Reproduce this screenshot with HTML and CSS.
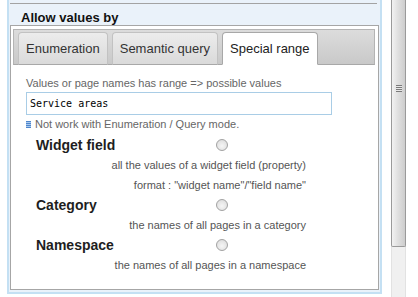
FILE: index.html
```html
<!DOCTYPE html>
<html lang="en">
<head>
  <meta charset="UTF-8" />
  <title>Allow values by</title>
  <link rel="stylesheet" href="styles.css">
</head>
<body>
  <div class="page">
    <div class="panel">
      <div class="panel-top"></div>
      <div class="section-title">Allow values by</div>

      <div class="tab-box">
        <div class="tab-bar">
          <div class="tab">Enumeration</div>
          <div class="tab">Semantic query</div>
          <div class="tab active">Special range</div>
        </div>

        <div class="tab-content">
          <div class="hint">Values or page names has range =&gt; possible values</div>
          <input class="range-input" type="text" value="Service areas" />
          <div class="note"><span class="note-icon"></span>Not work with Enumeration / Query mode.</div>

          <div class="options">
            <div class="opt-head">
              <span class="opt-label">Widget field</span>
              <span class="radio"></span>
            </div>
            <div class="opt-desc">all the values of a widget field (property)</div>
            <div class="opt-desc">format : "widget name"/"field name"</div>

            <div class="opt-head">
              <span class="opt-label">Category</span>
              <span class="radio"></span>
            </div>
            <div class="opt-desc">the names of all pages in a category</div>

            <div class="opt-head">
              <span class="opt-label">Namespace</span>
              <span class="radio"></span>
            </div>
            <div class="opt-desc">the names of all pages in a namespace</div>
          </div>
        </div>
      </div>
    </div>

    <div class="scrollbar">
      <div class="thumb"><span class="grip"></span></div>
    </div>
  </div>
</body>
</html>
```

FILE: styles.css
```css
body {
  margin: 0;
  background: #fff;
  font-family: "Liberation Sans", Arial, sans-serif;
}
.page {
  display: flex;
  height: 297px;
  overflow: hidden;
}
.panel {
  margin-left: 7px;
  width: 375px;
  height: 294px;
  box-sizing: border-box;
  padding: 0 1px;
  border: 2px solid #c4e0f3;
  border-top: none;
  background: #eaf2fa;
}
.panel-top {
  height: 3px;
  margin-right: 2px;
  border-bottom: 1px solid #a3a3a3;
}
.section-title {
  padding: 7px 0 0 11px;
  line-height: 14px;
  font-size: 13px;
  font-weight: bold;
  color: #111;
}
.tab-box {
  border: 1px solid #a6a6a6;
  background: #fff;
  padding: 3px 3px 0 2px;
  height: 260px;
}
.tab-bar {
  display: flex;
  align-items: flex-end;
  gap: 4px;
  height: 34px;
  padding: 0 4px;
  border: 1px solid #b4b4b4;
  border-bottom-color: #a8a8a8;
  background: linear-gradient(#dcdcdc, #c9c9c9);
}
.tab {
  height: 31px;
  margin-bottom: -1px;
  padding: 0 7px;
  line-height: 31px;
  font-size: 13px;
  color: #333;
  border: 1px solid #c2c2c2;
  border-bottom-color: #a8a8a8;
  border-radius: 4px 4px 0 0;
  background: linear-gradient(#ececec, #dadada);
}
.tab.active {
  background: #fff;
  border-color: #a8a8a8;
  border-bottom-color: #fff;
  color: #222;
}
.tab-content {
  padding: 11px 0 0 13px;
  font-size: 11px;
  color: #666;
}
.hint {
  line-height: 14px;
}
.range-input {
  display: block;
  margin-top: 2px;
  width: 306px;
  height: 23px;
  box-sizing: border-box;
  padding: 0 3px;
  border: 1px solid #a9cde6;
  font-family: "DejaVu Sans Mono", monospace;
  font-size: 10px;
  color: #000;
  outline: none;
}
.note {
  display: flex;
  align-items: center;
  margin-top: 2px;
  line-height: 14px;
}
.note-icon {
  width: 5px;
  height: 7px;
  margin-right: 4px;
  background: repeating-linear-gradient(#4f86cc 0 1px, #a9c9ee 1px 2px);
}
.options {
  margin: 4px 0 0 10px;
}
.opt-head {
  display: grid;
  grid-template-columns: 180px 12px;
  align-items: center;
  height: 20px;
}
.opt-label {
  font-size: 14px;
  font-weight: bold;
  color: #1e1e1e;
}
.radio {
  width: 10px;
  height: 10px;
  border: 1px solid #a2a2a2;
  border-radius: 50%;
  background: radial-gradient(circle at 50% 60%, #f6f6f6, #d8d8d8);
}
.opt-desc {
  width: 270px;
  line-height: 20px;
  text-align: right;
  color: #555;
}
.scrollbar {
  margin-left: 9px;
  width: 15px;
  box-sizing: border-box;
  border-left: 1px solid #e2e2e2;
  border-right: 1px solid #e2e2e2;
  background: #f0f0f0;
}
.thumb {
  display: flex;
  justify-content: center;
  height: 247px;
  margin: 0 -1px;
  box-sizing: border-box;
  border: 1px solid #9a9a9a;
  border-top: none;
  border-radius: 0 0 2px 2px;
  background: linear-gradient(to right, #f2f2f2, #e0e0e0 45%, #cdcdcd);
}
.grip {
  width: 6px;
  height: 7px;
  margin-top: 85px;
  background: repeating-linear-gradient(#7a7a7a 0 1px, #e8e8e8 1px 2px);
}
```
